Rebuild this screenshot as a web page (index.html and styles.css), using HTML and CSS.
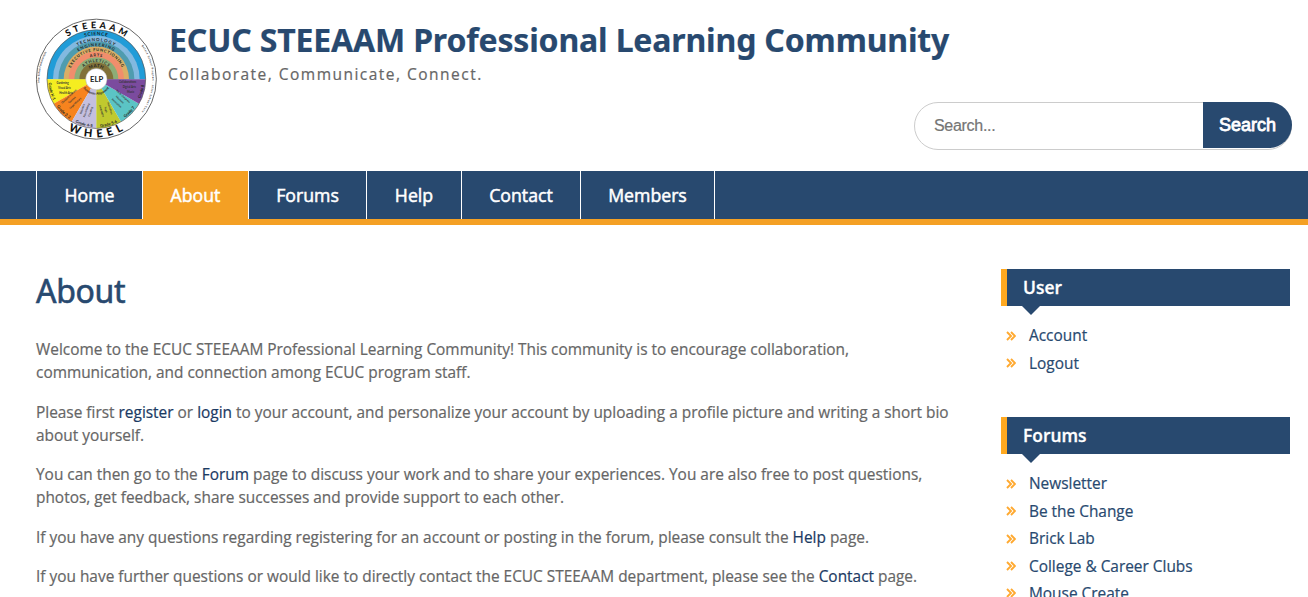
FILE: index.html
```html
<!DOCTYPE html>
<html lang="en">
<head>
<meta charset="utf-8">
<title>About – ECUC STEEAAM Professional Learning Community</title>
<link rel="stylesheet" href="styles.css">
</head>
<body>
<svg class="sprite" aria-hidden="true"><symbol id="chevrons" viewBox="0 0 10 10"><path d="M1 1l4 4-4 4M5 1l4 4-4 4" fill="none" stroke="currentColor" stroke-width="1.9"/></symbol></svg>
<header class="header">
  <svg class="logo" viewBox="30 26 363 363" role="img" aria-label="STEEAAM Wheel">
    <defs>
      <path id="top" d="M58 208a153 153 0 0 1 306 0"/>
      <path id="bottom" d="M37 208a174 174 0 0 0 348 0"/>
      <path id="r1" d="M79 208a132 132 0 0 1 264 0"/>
      <path id="r2" d="M97 208a114 114 0 0 1 228 0"/>
      <path id="r3" d="M112 208a99 99 0 0 1 198 0"/>
      <path id="r4" d="M127 208a84 84 0 0 1 168 0"/>
      <path id="r5" d="M143 208a68 68 0 0 1 136 0"/>
      <path id="r6" d="M159 208a52 52 0 0 1 104 0"/>
      <path id="r7" d="M175 208a36 36 0 0 1 72 0"/>
      <path id="grades" d="M67 208a144 144 0 0 0 288 0"/>
      <path id="sideL" d="M60 290a172 172 0 0 1 50-218"/>
      <path id="sideR" d="M312 72a170 170 0 0 1 0 270"/>
      <path id="hub" d="M164 208a47 47 0 0 0 94 0"/>
    </defs>
    <circle cx="211" cy="208" r="180" fill="#fff" stroke="#666" stroke-width="3"/>
    <g>
      <path d="M63 208a148 148 0 0 1 296 0z" fill="#209cd8"/>
      <path d="M81 208a130 130 0 0 1 260 0z" fill="#82b9e0"/>
      <path d="M97 208a114 114 0 0 1 228 0z" fill="#4f9caf"/>
      <path d="M113 208a98 98 0 0 1 196 0z" fill="#dbae65"/>
      <path d="M128 208a83 83 0 0 1 166 0z" fill="#f18e6c"/>
      <path d="M145 208a66 66 0 0 1 132 0z" fill="#8dad77"/>
      <path d="M160 208a51 51 0 0 1 102 0z" fill="#817139"/>
    </g>
    <g>
      <path d="M211 208H63a148 148 0 0 0 20 74z" fill="#f5ed20"/>
      <path d="M211 208L83 282a148 148 0 0 0 54 54z" fill="#f7831e"/>
      <path d="M211 208l-74 128a148 148 0 0 0 74 20z" fill="#c4bfdf"/>
      <path d="M211 208v148a148 148 0 0 0 74-20z" fill="#c0c92e"/>
      <path d="M211 208l74 128a148 148 0 0 0 54-54z" fill="#5bc4c5"/>
      <path d="M211 208l128 74a148 148 0 0 0 20-74z" fill="#7b4b9e"/>
    </g>
    <circle cx="211" cy="208" r="148" fill="none" stroke="#555" stroke-width="2"/>
    <g class="ring-text">
      <text font-size="14" letter-spacing="2"><textPath href="#r1" startOffset="50%">SCIENCE</textPath></text>
      <text font-size="13" letter-spacing="3"><textPath href="#r2" startOffset="50%">TECHNOLOGY</textPath></text>
      <text font-size="13" letter-spacing="2.5"><textPath href="#r3" startOffset="50%">ENGINEERING</textPath></text>
      <text font-size="12" letter-spacing="2"><textPath href="#r4" startOffset="50%">EXECUTIVE FUNCTIONING</textPath></text>
      <text font-size="12" letter-spacing="2"><textPath href="#r5" startOffset="50%">ARTS</textPath></text>
      <text font-size="12" letter-spacing="2.5"><textPath href="#r6" startOffset="50%">ATHLETICS</textPath></text>
      <text font-size="13" letter-spacing="1"><textPath href="#r7" startOffset="50%">MATH</textPath></text>
      <text font-size="12"><textPath href="#grades" startOffset="8.5%">Grade K-1</textPath></text>
      <text font-size="12"><textPath href="#grades" startOffset="25%">Grade 2-3</textPath></text>
      <text font-size="12"><textPath href="#grades" startOffset="41.5%">Grade 4-5</textPath></text>
      <text font-size="12"><textPath href="#grades" startOffset="58.5%">Grade 5-6</textPath></text>
      <text font-size="12"><textPath href="#grades" startOffset="75%">Grade 7</textPath></text>
      <text font-size="12"><textPath href="#grades" startOffset="91.5%">Grade 8</textPath></text>
      <text font-size="10"><textPath href="#hub" startOffset="50%">Academic Alignment</textPath></text>
      <text class="heavy" font-size="27" letter-spacing="9.5"><textPath href="#top" startOffset="51%">STEEAAM</textPath></text>
      <text class="heavy" font-size="33" letter-spacing="14"><textPath href="#bottom" startOffset="51%">WHEEL</textPath></text>
    </g>
    <g class="tiny-text">
      <text><textPath href="#sideL" startOffset="50%">After School Fundamentals</textPath></text>
      <text letter-spacing="1.5"><textPath href="#sideR" startOffset="50%">Before School Program · After School Core</textPath></text>
      <text x="110" y="224">Gardening</text><text x="115" y="238">Visual Arts</text><text x="120" y="252">Health Arts</text>
      <text x="305" y="221">Collaborations</text><text x="310" y="236">Digital Arts</text><text x="314" y="251">Music</text>
      <g transform="rotate(-43 140 272)"><text x="140" y="258">Outdoor Science</text><text x="140" y="272">Careers</text><text x="140" y="286">Legal History</text></g>
      <g transform="rotate(-72 183 302)"><text x="183" y="290">Robotics</text><text x="183" y="303">Film Making</text><text x="183" y="316">Creating</text></g>
      <g transform="rotate(73 237 300)"><text x="237" y="287">Journalism</text><text x="237" y="300">Yoga</text><text x="237" y="313">Languages</text></g>
      <g transform="rotate(43 281 270)"><text x="281" y="258">Youth Congress</text><text x="281" y="272">Museum</text><text x="281" y="286">Innovation</text></g>
    </g>
    <circle cx="211" cy="208" r="32" fill="#fff" stroke="#aaa" stroke-width="1.5"/>
    <text class="elp" x="212" y="216">ELP</text>
  </svg>
  <div class="branding">
    <p class="site-title">ECUC STEEAAM Professional Learning Community</p>
    <p class="tagline">Collaborate, Communicate, Connect.</p>
  </div>
  <form class="search">
    <input class="search-field" type="text" placeholder="Search..." aria-label="Search">
    <button class="search-button" type="button">Search</button>
  </form>
</header>
<nav class="nav">
  <a class="nav-link home" href="#">Home</a>
  <a class="nav-link about current" href="#">About</a>
  <a class="nav-link forums" href="#">Forums</a>
  <a class="nav-link help" href="#">Help</a>
  <a class="nav-link contact" href="#">Contact</a>
  <a class="nav-link members" href="#">Members</a>
</nav>
<div class="page">
  <main class="content">
    <h1 class="page-title">About</h1>
    <p>Welcome to the ECUC STEEAAM Professional Learning Community! This community is to encourage collaboration,<br>communication, and connection among ECUC program staff.</p>
    <p>Please first <a href="#">register</a> or <a href="#">login</a> to your account, and personalize your account by uploading a profile picture and writing a short bio<br>about yourself.</p>
    <p>You can then go to the <a href="#">Forum</a> page to discuss your work and to share your experiences. You are also free to post questions,<br>photos, get feedback, share successes and provide support to each other.</p>
    <p>If you have any questions regarding registering for an account or posting in the forum, please consult the <a href="#">Help</a> page.</p>
    <p>If you have further questions or would like to directly contact the ECUC STEEAAM department, please see the <a href="#">Contact</a> page.</p>
  </main>
  <aside class="sidebar">
    <section class="widget">
      <h2 class="widget-title">User</h2>
      <ul class="links">
        <li><svg class="chev"><use href="#chevrons"/></svg><a href="#">Account</a></li>
        <li><svg class="chev"><use href="#chevrons"/></svg><a href="#">Logout</a></li>
      </ul>
    </section>
    <section class="widget">
      <h2 class="widget-title">Forums</h2>
      <ul class="links">
        <li><svg class="chev"><use href="#chevrons"/></svg><a href="#">Newsletter</a></li>
        <li><svg class="chev"><use href="#chevrons"/></svg><a href="#">Be the Change</a></li>
        <li><svg class="chev"><use href="#chevrons"/></svg><a href="#">Brick Lab</a></li>
        <li><svg class="chev"><use href="#chevrons"/></svg><a href="#">College &amp; Career Clubs</a></li>
        <li><svg class="chev"><use href="#chevrons"/></svg><a href="#">Mouse Create</a></li>
      </ul>
    </section>
  </aside>
</div>
</body>
</html>
```
FILE: styles.css
```css
* { box-sizing: border-box; }
html, body { height: 597px; overflow: hidden; }
body { margin: 0; background: #fff; color: #666; font: 15.41px/23px "Open Sans", sans-serif; -webkit-text-stroke: 0.2px; }
a { text-decoration: none; color: #1b3a63; }
p, h1, h2, ul { margin: 0; padding: 0; }
.sprite { display: none; }

.header { display: flex; height: 171px; padding: 18px 16px 0 36px; }
.logo { width: 121px; height: 122px; flex: none; -webkit-text-stroke: 0; }
.ring-text { font-family: Lato, sans-serif; font-weight: 700; fill: #222; text-anchor: middle; }
.heavy { font-weight: 900; fill: #111; }
.tiny-text { font-family: Lato, sans-serif; font-size: 8px; font-weight: 700; fill: #333; text-anchor: middle; }
.elp { font: 700 23px Lato, sans-serif; fill: #222; text-anchor: middle; }
.branding { flex: none; width: 757px; padding-left: 11px; white-space: nowrap; }
.site-title { padding: 2px 0 0 1px; font: 700 32px/40px "Noto Sans", sans-serif; letter-spacing: -0.16px; color: #28496f; }
.tagline { padding-top: 2px; font-size: 15.5px; line-height: 24px; letter-spacing: 1.48px; }

.search { display: flex; width: 378px; height: 48px; margin-top: 84px; border: 1px solid #ccc; border-radius: 24px; flex: none; }
.search-field { flex: 1; min-width: 0; border: 0; padding: 0 19px; background: none; font: 16px "Liberation Sans", sans-serif; letter-spacing: -0.3px; outline: 0; -webkit-text-stroke: 0.2px; }
.search-field::placeholder { color: #757575; opacity: 1; }
.search-button { width: 89px; height: 46px; margin: -1px -1px 0 0; padding: 0; border: 0; border-radius: 0 23px 23px 0; background: #28496f; color: #fff; font: 400 18px "Liberation Sans", sans-serif; -webkit-text-stroke: 0.8px; }

.nav { display: flex; height: 54px; padding-left: 36px; background: #28496f; border-bottom: 6px solid #f4a024; }
.nav-link { display: flex; justify-content: center; border-left: 1px solid #fff; color: #fff; font-size: 17.7px; line-height: 49px; -webkit-text-stroke: 0.5px; }
.current { background: #f4a024; }
.home, .about { width: 106px; }
.forums { width: 118px; }
.help { width: 95px; }
.contact { width: 119px; }
.members { width: 135px; border-right: 1px solid #fff; }

.page { display: flex; justify-content: space-between; padding: 44px 18px 0 36px; }
.content { width: 940px; white-space: nowrap; }
.page-title { margin-bottom: 25px; font: 400 32px/44px "Noto Sans", sans-serif; letter-spacing: -0.3px; color: #28496f; -webkit-text-stroke: 0.6px; }
.content p { margin-bottom: 16.5px; }
.sidebar { width: 289px; }
.widget { margin-bottom: 40px; }
.widget-title { position: relative; height: 37px; border-left: 6px solid #ffa920; padding-left: 16px; background: #28496f; color: #fff; font-size: 17.4px; font-weight: 600; line-height: 36px; -webkit-text-stroke: 0.3px; }
.widget-title::after { content: ""; position: absolute; left: 15px; top: 37px; border: 9px solid transparent; border-top-color: #28496f; border-bottom: 0; }
.links { list-style: none; padding: 16.2px 0 0 5px; }
.links li { display: flex; align-items: center; height: 27.4px; gap: 13px; }
.links a { color: #28496f; }
.chev { width: 10px; height: 10px; color: #ffa930; }
```
